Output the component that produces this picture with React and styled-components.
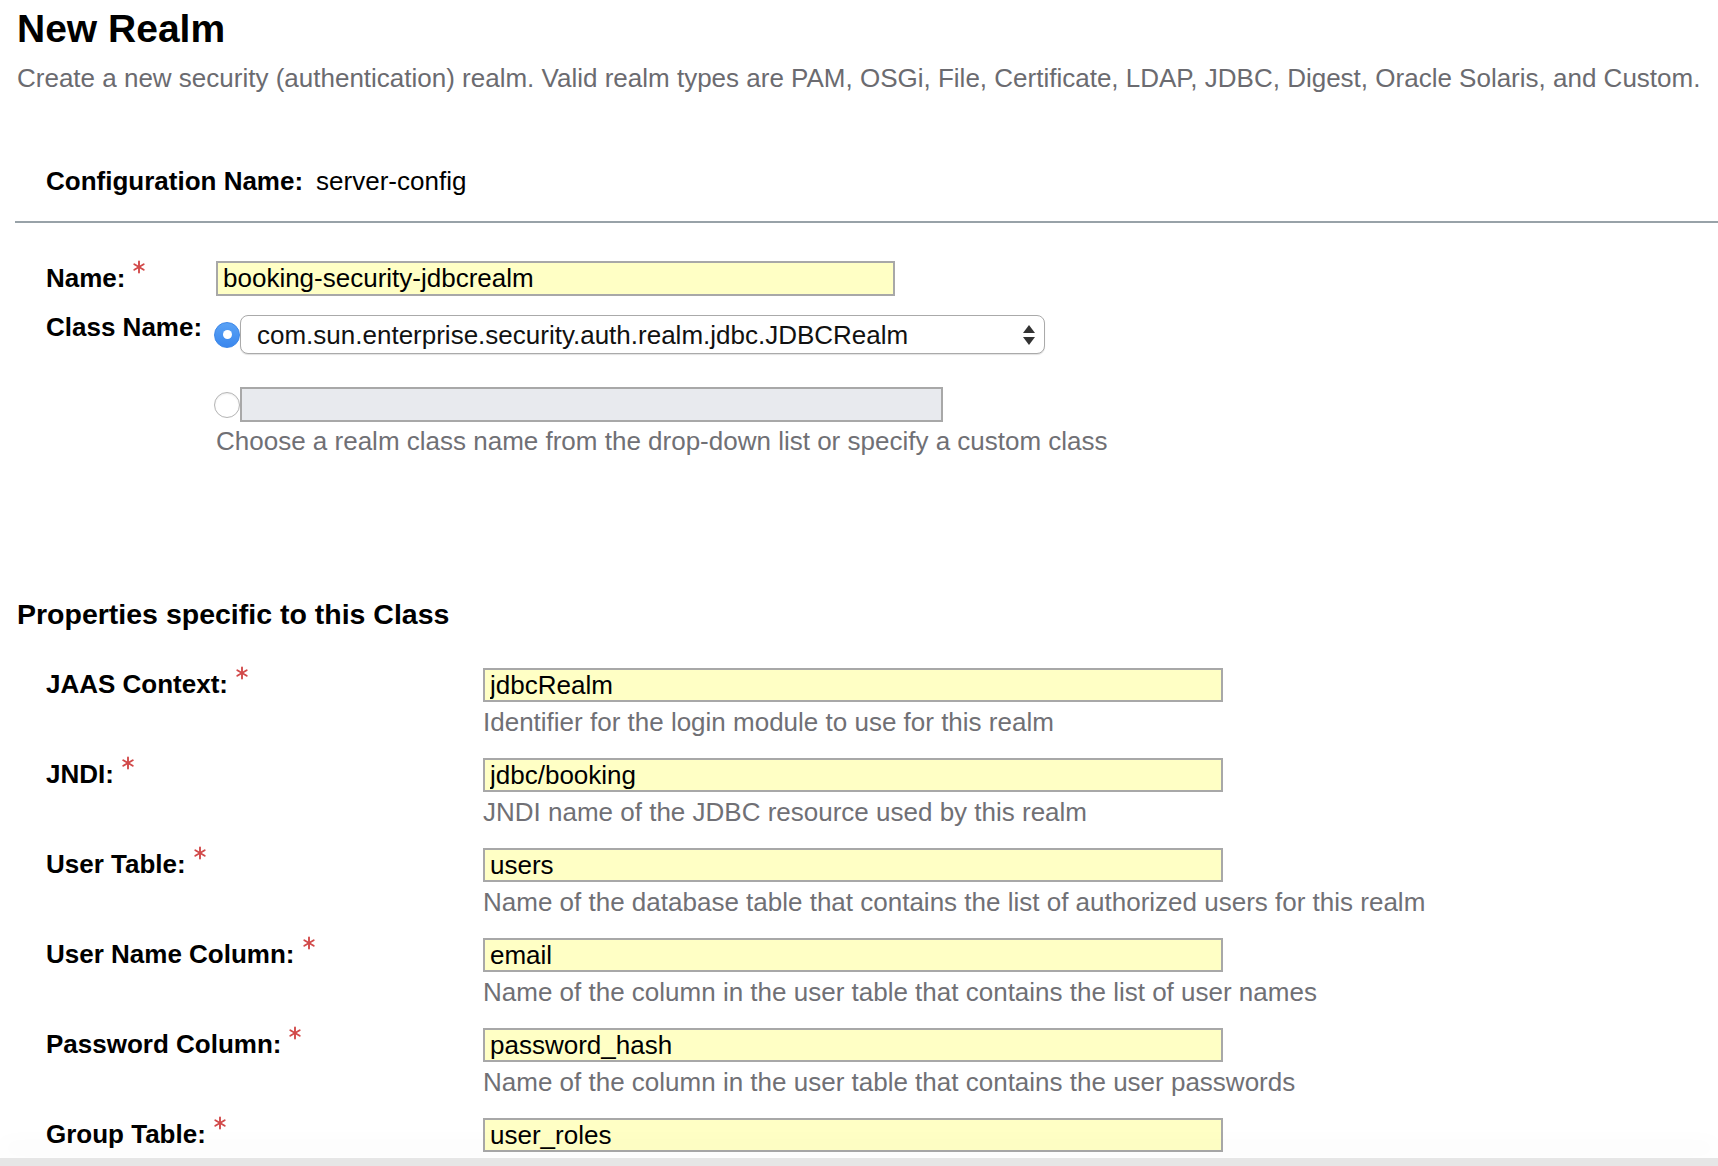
import React from 'react'
import styled, { createGlobalStyle } from 'styled-components';

const GlobalStyle = createGlobalStyle`
  body {
    margin: 0;
    background: #fff;
    font-family: "Liberation Sans", Arial, Helvetica, sans-serif;
    color: #000;
  }
`;

const Page = styled.div`
  padding: 7px 0 60px 17px;
`;

const Title = styled.h1`
  margin: 0;
  font-size: 39px;
  line-height: 44px;
  font-weight: 700;
`;

const Subtitle = styled.p`
  margin: 12px 0 0;
  font-size: 26px;
  line-height: 30px;
  color: #6b6b70;
  white-space: nowrap;
`;

const ConfigRow = styled.div`
  display: flex;
  gap: 13px;
  margin-top: 73px;
  padding-left: 29px;
  font-size: 26px;
  line-height: 30px;
`;

const Bold = styled.span`
  font-weight: 700;
`;

const Hr = styled.hr`
  margin: 25px 0 0 -2px;
  border: 0;
  border-top: 2px solid #98a2a8;
`;

const Form = styled.div`
  display: grid;
  grid-template-columns: 170px auto;
  align-items: start;
  margin-top: 38px;
  padding-left: 29px;
  font-size: 26px;
  line-height: 30px;
`;

const Label = styled.div`
  font-weight: 700;
  margin-top: ${({ $offset }) => $offset || 0}px;
  white-space: nowrap;
`;

const Field = styled.div`
  display: flex;
  flex-direction: column;
  align-items: flex-start;
  margin-bottom: ${({ $mb }) => $mb || 0}px;
`;

const TextInput = styled.input`
  box-sizing: border-box;
  width: ${({ $w }) => $w}px;
  height: ${({ $h }) => $h || 34}px;
  margin: 0;
  padding: 0 5px;
  border: 2px solid #a8a8a8;
  background: ${({ disabled }) => (disabled ? '#e8eaee' : '#ffffc5')};
  font-family: inherit;
  font-size: 26px;
  color: #000;
  outline: none;
`;

const ChoiceLine = styled.div`
  display: flex;
  align-items: center;
  margin-left: -2px;
  margin-top: ${({ $mt }) => $mt || 0}px;
`;

const Radio = styled.span`
  box-sizing: border-box;
  width: 26px;
  height: 26px;
  border-radius: 50%;
  flex: none;
  display: flex;
  align-items: center;
  justify-content: center;
  background: ${({ $on }) => ($on ? 'linear-gradient(#5aa2f5, #3a87ee)' : '#fff')};
  border: ${({ $on }) => ($on ? '1px solid #3b86e8' : '1.5px solid #b4b4b4')};
  box-shadow: ${({ $on }) => ($on ? 'none' : 'inset 0 1px 2px rgba(0,0,0,0.08)')};

  &::after {
    content: '';
    display: ${({ $on }) => ($on ? 'block' : 'none')};
    width: 9px;
    height: 9px;
    border-radius: 50%;
    background: #fff;
  }
`;

const SelectBox = styled.div`
  box-sizing: border-box;
  width: 805px;
  height: 39px;
  display: flex;
  align-items: center;
  justify-content: space-between;
  padding: 0 8px 0 16px;
  border: 1.5px solid #aaaaaa;
  border-radius: 8px;
  background: #fff;
  box-shadow: 0 1px 1px rgba(0,0,0,0.12);
  font-size: 26px;
  color: #111;
`;

const Help = styled.div`
  margin-top: ${({ $mt }) => $mt || 5}px;
  font-size: 26px;
  line-height: 30px;
  color: #707075;
  white-space: nowrap;
`;

const SectionTitle = styled.h2`
  margin: 142px 0 0;
  font-size: 28.5px;
  line-height: 32px;
  font-weight: 700;
`;

const PropGrid = styled.div`
  display: grid;
  grid-template-columns: 437px auto;
  align-items: start;
  margin-top: 38px;
  padding-left: 29px;
  font-size: 26px;
  line-height: 30px;
`;

const Star = styled.svg`
  width: 14px;
  height: 14px;
  margin-left: 7px;
  vertical-align: 13px;
`;

const Footer = styled.div`
  position: fixed;
  left: 0;
  right: 0;
  bottom: 0;
  height: 8px;
  background: #e6e6e6;
  box-shadow: 0 -14px 22px rgba(0,0,0,0.035);
`;

const Required = () => (
  <Star viewBox="0 0 14 14">
    <g stroke="#d24a4a" strokeWidth="1.9" strokeLinecap="round">
      <line x1="7" y1="1.5" x2="7" y2="12.5" />
      <line x1="2.3" y1="4.3" x2="11.7" y2="9.7" />
      <line x1="2.3" y1="9.7" x2="11.7" y2="4.3" />
    </g>
  </Star>
);

const UpDown = () => (
  <svg width="14" height="22" viewBox="0 0 14 22">
    <path d="M7 1 L13 9 L1 9 Z" fill="#333" />
    <path d="M1 13 L13 13 L7 21 Z" fill="#333" />
  </svg>
);

const properties = [
  { label: 'JAAS Context:', value: 'jdbcRealm', help: 'Identifier for the login module to use for this realm' },
  { label: 'JNDI:', value: 'jdbc/booking', help: 'JNDI name of the JDBC resource used by this realm' },
  { label: 'User Table:', value: 'users', help: 'Name of the database table that contains the list of authorized users for this realm' },
  { label: 'User Name Column:', value: 'email', help: 'Name of the column in the user table that contains the list of user names' },
  { label: 'Password Column:', value: 'password_hash', help: 'Name of the column in the user table that contains the user passwords' },
  { label: 'Group Table:', value: 'user_roles' },
];

const App = () => {
  return (
    <>
      <GlobalStyle />
      <Page>
        <Title>New Realm</Title>
        <Subtitle>
          Create a new security (authentication) realm. Valid realm types are PAM, OSGi, File, Certificate, LDAP, JDBC, Digest, Oracle Solaris, and Custom.
        </Subtitle>
        <ConfigRow>
          <Bold>Configuration Name:</Bold>
          <span>server-config</span>
        </ConfigRow>
        <Hr />

        <Form>
          <Label $offset={-1}>Name:<Required /></Label>
          <Field $mb={19}>
            <TextInput $w={679} $h={35} readOnly value="booking-security-jdbcrealm" />
          </Field>

          <Label $offset={-3}>Class Name:</Label>
          <Field>
            <ChoiceLine>
              <Radio $on />
              <SelectBox>
                <span>com.sun.enterprise.security.auth.realm.jdbc.JDBCRealm</span>
                <UpDown />
              </SelectBox>
            </ChoiceLine>
            <ChoiceLine $mt={33}>
              <Radio />
              <TextInput $w={703} $h={35} disabled value="" />
            </ChoiceLine>
            <Help $mt={4}>Choose a realm class name from the drop-down list or specify a custom class</Help>
          </Field>
        </Form>

        <SectionTitle>Properties specific to this Class</SectionTitle>

        <PropGrid>
          {properties.map((p) => (
            <React.Fragment key={p.label}>
              <Label $offset={-2}>{p.label}<Required /></Label>
              <Field $mb={21}>
                <TextInput $w={740} readOnly value={p.value} />
                {p.help && <Help>{p.help}</Help>}
              </Field>
            </React.Fragment>
          ))}
        </PropGrid>
      </Page>
      <Footer />
    </>
  )
}

export default App;
